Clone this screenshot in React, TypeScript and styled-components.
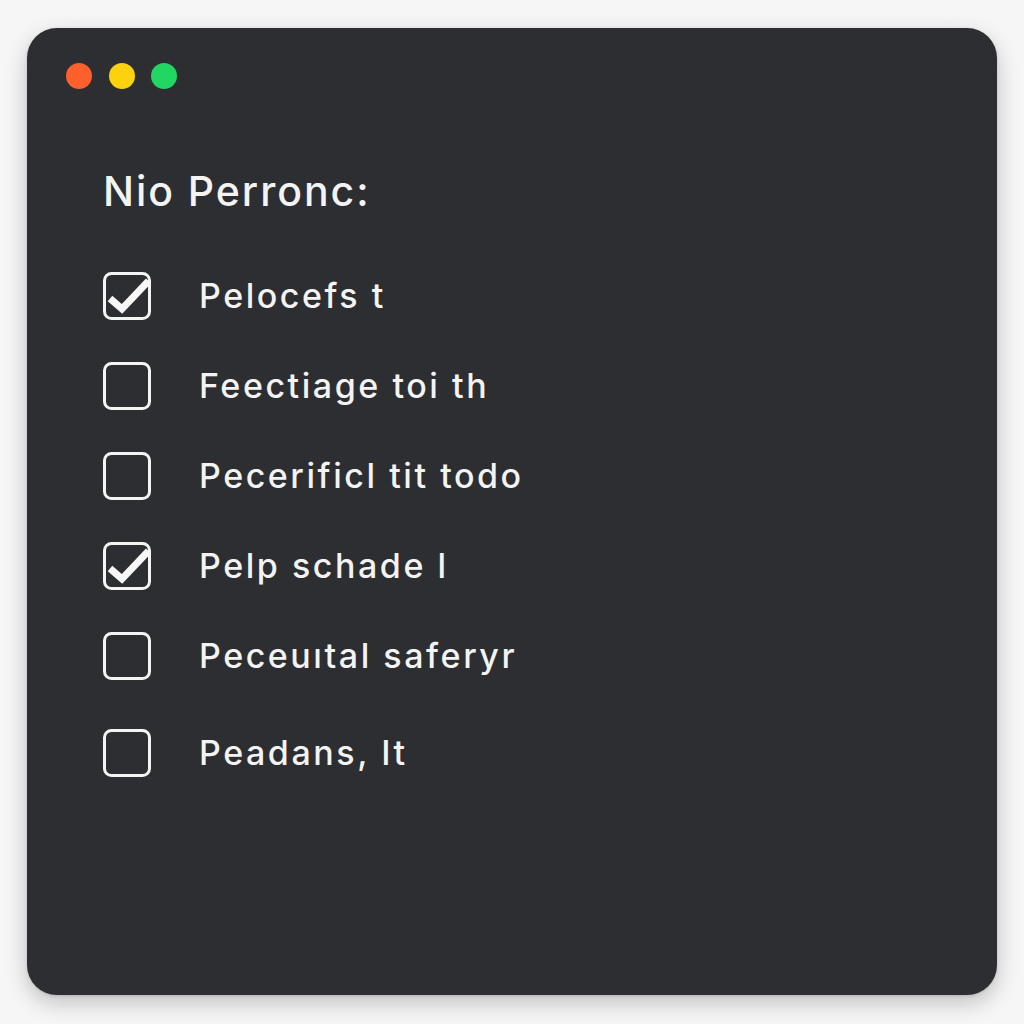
import React from 'react';
import styled, { createGlobalStyle } from 'styled-components';

interface Task {
  label: string;
  done: boolean;
}

const TASKS: Task[] = [
  { label: 'Pelocefs t', done: true },
  { label: 'Feectiage toi th', done: false },
  { label: 'Pecerificl tit todo', done: false },
  { label: 'Pelp schade l', done: true },
  { label: 'Peceuıtal saferyr', done: false },
  { label: 'Peadans, It', done: false },
];

const DOTS = ['#fd5f2d', '#fcd20f', '#21d662'];

const CheckBox: React.FC<{ checked: boolean }> = ({ checked }) => (
  <BoxSvg viewBox="0 0 48 48" width={48} height={48}>
    <rect x="1.5" y="1.5" width="45" height="45" rx="7" fill="none" stroke="#f4f4f4" strokeWidth="3" />
    {checked && (
      <path
        d="M7 26.5 L19 37 L45.5 9"
        fill="none"
        stroke="#f7f7f7"
        strokeWidth="7"
        strokeLinejoin="miter"
      />
    )}
  </BoxSvg>
);

const App: React.FC = () => {
  return (
    <>
      <GlobalStyle />
      <Page>
        <Window>
          <TitleBar>
            {DOTS.map(color => (
              <Dot key={color} color={color} />
            ))}
          </TitleBar>
          <Heading>Nio Perronc:</Heading>
          <TaskList>
            {TASKS.map((task, idx) => (
              <TaskRow key={idx} last={idx === TASKS.length - 1}>
                <CheckBox checked={task.done} />
                <TaskLabel>{task.label}</TaskLabel>
              </TaskRow>
            ))}
          </TaskList>
        </Window>
      </Page>
    </>
  );
};

export default App;

const GlobalStyle = createGlobalStyle`
  html, body {
    margin: 0;
    padding: 0;
    background: #f6f6f6;
  }
  body {
    font-family: Inter, 'Liberation Sans', sans-serif;
  }
`;

const Page = styled.div`
  width: 1024px;
  height: 1024px;
  box-sizing: border-box;
  padding: 28px 27px 29px 27px;
  background: #f6f6f6;
`;

const Window = styled.div`
  height: 100%;
  box-sizing: border-box;
  padding: 35px 76px 0 76px;
  background: #2c2e31;
  border-radius: 30px;
  box-shadow: 0 8px 22px rgba(0, 0, 0, 0.22), 0 1px 3px rgba(0, 0, 0, 0.12);
`;

const TitleBar = styled.div`
  display: flex;
  gap: 16.5px;
  margin-left: -37px;
`;

const Dot = styled.span<{ color: string }>`
  width: 26px;
  height: 26px;
  border-radius: 50%;
  background: ${props => props.color};
`;

const Heading = styled.h1`
  margin: 82px 0 0 0;
  font-size: 41px;
  line-height: 41px;
  font-weight: 500;
  color: #f3f3f3;
  letter-spacing: 1.95px;
`;

const TaskList = styled.ul`
  list-style: none;
  margin: 60px 0 0 0;
  padding: 0;
  display: flex;
  flex-direction: column;
  gap: 42px;
`;

const TaskRow = styled.li<{ last: boolean }>`
  display: flex;
  align-items: center;
  gap: 48px;
  height: 48px;
  margin-top: ${props => (props.last ? '7px' : '0')};
`;

const BoxSvg = styled.svg`
  flex-shrink: 0;
  display: block;
`;

const TaskLabel = styled.span`
  font-size: 34px;
  line-height: 34px;
  font-weight: 500;
  color: #f3f3f3;
  letter-spacing: 2.55px;
`;
